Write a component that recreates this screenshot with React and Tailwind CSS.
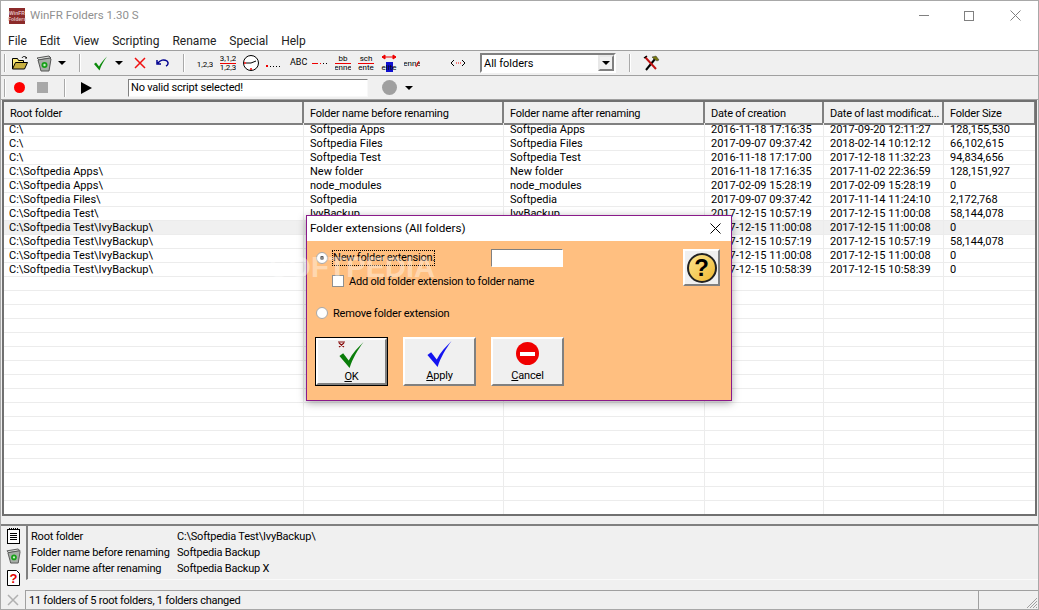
const font = "[font-family:Roboto,'Liberation_Sans',sans-serif]";
const uiFont = "[font-family:Roboto,'Open_Sans',sans-serif]";

const columns = ["Root folder", "Folder name before renaming", "Folder name after renaming", "Date of creation", "Date of last modificat...", "Folder Size"];

const rows = [
  ["C:\\", "Softpedia Apps", "Softpedia Apps", "2016-11-18 17:16:35", "2017-09-20 12:11:27", "128,155,530"],
  ["C:\\", "Softpedia Files", "Softpedia Files", "2017-09-07 09:37:42", "2018-02-14 10:12:12", "66,102,615"],
  ["C:\\", "Softpedia Test", "Softpedia Test", "2016-11-18 17:17:00", "2017-12-18 11:32:23", "94,834,656"],
  ["C:\\Softpedia Apps\\", "New folder", "New folder", "2016-11-18 17:16:35", "2017-11-02 22:36:59", "128,151,927"],
  ["C:\\Softpedia Apps\\", "node_modules", "node_modules", "2017-02-09 15:28:19", "2017-02-09 15:28:19", "0"],
  ["C:\\Softpedia Files\\", "Softpedia", "Softpedia", "2017-09-07 09:37:42", "2017-11-14 11:24:10", "2,172,768"],
  ["C:\\Softpedia Test\\", "IvyBackup", "IvyBackup", "2017-12-15 10:57:19", "2017-12-15 11:00:08", "58,144,078"],
  ["C:\\Softpedia Test\\IvyBackup\\", "", "", "2017-12-15 11:00:08", "2017-12-15 11:00:08", "0"],
  ["C:\\Softpedia Test\\IvyBackup\\", "", "", "2017-12-15 10:57:19", "2017-12-15 10:57:19", "58,144,078"],
  ["C:\\Softpedia Test\\IvyBackup\\", "", "", "2017-12-15 11:00:08", "2017-12-15 11:00:08", "0"],
  ["C:\\Softpedia Test\\IvyBackup\\", "", "", "2017-12-15 10:58:39", "2017-12-15 10:58:39", "0"],
];

const gridCols = "grid grid-cols-[300px_200px_201px_119px_120px_92px]";

function TextIcon({ top, bottom, line = "#e00" }) {
  return (
    <svg width="16" height="20" viewBox="0 0 16 20" className="shrink-0">
      <text x="8" y="8" textAnchor="middle" fontSize="8" fontFamily="Roboto" fill="#000">{top}</text>
      <text x="8" y="17" textAnchor="middle" fontSize="8" fontFamily="Roboto" fill="#000">{bottom}</text>
      <line x1="0" y1="10.5" x2="16" y2="10.5" stroke={line} />
    </svg>
  );
}

function Sep() {
  return <div className="w-[2px] h-[18px] bg-[#a9a9a9] border-r border-white shrink-0" />;
}

function Caret() {
  return <div className="w-0 h-0 border-l-[4px] border-r-[4px] border-t-[4px] border-l-transparent border-r-transparent border-t-black shrink-0" />;
}

function Folder() {
  return (
    <svg width="16" height="14" viewBox="0 0 16 14">
      <path d="M.5 13V2.500h5l1 2h5v2" fill="#f8e878" stroke="#000" />
      <path d="M.5 13l3-6.500h12l-3 6.500z" fill="#c8b040" stroke="#000" />
      <path d="M10 2c1-2 3-2 5 0l-2 0" fill="none" stroke="#000" />
    </svg>
  );
}

function Bin({ size = 15 }) {
  return (
    <svg width={size} height={size + 1} viewBox="0 0 16 17">
      <path d="M1 3l12-2 2 2-12 2z" fill="#d8dcd8" stroke="#555" />
      <path d="M2 5l12-2 1 1-2 12H5z" fill="#a8aea8" stroke="#555" />
      <circle cx="8.500" cy="10" r="3" fill="#18a018" />
      <circle cx="8.500" cy="10" r="1.200" fill="#c8f0c8" />
    </svg>
  );
}

function Tick({ color, w = 13, h = 15 }) {
  return (
    <svg width={w} height={h} viewBox="0 0 26 28">
      <path d="M0 15l4-3 6 8C14 12 20 6 26 0 20 8 14 18 11 28z" fill={color} />
    </svg>
  );
}

function Toolbar1() {
  return (
    <div className="h-[25px] flex items-center border-b border-[#a0a0a0] bg-[#f0f0f0]">
      <div className="ml-[3px]"><Sep /></div>
      <div className="ml-[6px]"><Folder /></div>
      <div className="ml-[8px]"><Bin size={16} /></div>
      <div className="ml-[6px]"><Caret /></div>
      <div className="ml-[13px]"><Sep /></div>
      <div className="ml-[13px]"><Tick color="#0a8a0a" /></div>
      <div className="ml-[8px]"><Caret /></div>
      <svg width="12" height="12" viewBox="0 0 12 12" className="ml-[11px]">
        <path d="M1 1l10 10M11 1L1 11" stroke="#f01010" strokeWidth="1.500" />
      </svg>
      <svg width="14" height="10" viewBox="0 0 14 10" className="ml-[10px]">
        <path d="M1 2v4h4M2 5c2-3 6-4 9-2 2 2 1 4-1 5" fill="none" stroke="#000090" strokeWidth="1.500" />
      </svg>
      <div className="ml-[13px]"><Sep /></div>
      <svg width="16" height="20" viewBox="0 0 16 20" className="ml-[12px]">
        <text x="8" y="14" textAnchor="middle" fontSize="8" fontFamily="Roboto" fill="#000">1,2,3</text>
      </svg>
      <div className="ml-[7px]"><TextIcon top="3,1,2" bottom="1,2,3" /></div>
      <svg width="16" height="16" viewBox="0 0 16 16" className="ml-[7px]">
        <circle cx="8" cy="8" r="7.500" fill="#fff" stroke="#000" />
        <path d="M8 8l5-2M8 8H3" stroke="#000" />
        <circle cx="8" cy="14" r="1" fill="#e00" />
        <circle cx="2" cy="8" r="1" fill="#e00" />
      </svg>
      <div className="ml-[7px] w-[16px] flex items-center gap-[2px] pt-[6px]">
        <span className="w-[2px] h-[2px] bg-[#e00]" />
        <span className="w-[1px] h-[1px] bg-black" />
        <span className="w-[1px] h-[1px] bg-black" />
        <span className="w-[1px] h-[1px] bg-black" />
        <span className="w-[1px] h-[1px] bg-black" />
      </div>
      <span className={`ml-[8px] text-[9px] w-[16px] ${font}`}>ABC</span>
      <div className="ml-[6px] w-[16px] flex items-center gap-[2px]">
        <span className="w-[6px] h-[1px] bg-[#e00]" />
        <span className="w-[1px] h-[1px] bg-[#e00]" />
        <span className="w-[1px] h-[1px] bg-black" />
        <span className="w-[1px] h-[1px] bg-black" />
      </div>
      <div className="ml-[7px]"><TextIcon top="bb" bottom="enne" /></div>
      <div className="ml-[7px]"><TextIcon top="sch" bottom="ente" /></div>
      <svg width="16" height="20" viewBox="0 0 16 20" className="ml-[7px]">
        <path d="M1 4h14M1 4l3-2v4zM15 4l-3-2v4z" stroke="#e00" fill="#e00" />
        <rect x="5" y="9" width="7" height="10" fill="#1010d0" />
        <text x="8" y="17" textAnchor="middle" fontSize="8" fontFamily="Roboto" fill="#000">elite</text>
      </svg>
      <svg width="16" height="20" viewBox="0 0 16 20" className="ml-[7px]">
        <text x="8" y="13" textAnchor="middle" fontSize="8" fontFamily="Roboto" fill="#000">enne</text>
        <path d="M12 14l3-6" stroke="#e00" />
      </svg>
      <svg width="16" height="10" viewBox="0 0 16 10" className="ml-[30px]">
        <path d="M4 2L1 5l3 3M12 2l3 3-3 3" fill="none" stroke="#000" />
        <path d="M6 5h1M8 5h1M10 5h1" stroke="#e00" />
      </svg>
      <div className="ml-[14px] w-[136px] h-[20px] flex items-center bg-white border-2 border-b-white border-r-white border-t-[#808080] border-l-[#808080]">
        <span className={`flex-1 pl-[2px] pt-[3px] text-[11px] ${font}`}>All folders</span>
        <div className="w-[16px] h-full bg-[#f0f0f0] border-2 border-[#808080] border-t-[#e8e8e8] border-l-[#e8e8e8] flex items-center justify-center">
          <Caret />
        </div>
      </div>
      <div className="ml-[13px]"><Sep /></div>
      <svg width="17" height="16" viewBox="0 0 17 16" className="ml-[12px]">
        <path d="M3 15L12 4" stroke="#000" strokeWidth="2" />
        <path d="M9 2l4-1 3 4-2 1-3-2z" fill="#7a7a10" stroke="#333" strokeWidth=".5" />
        <path d="M2 2l11 12" stroke="#c01010" strokeWidth="2" />
        <path d="M1 3l3-2" stroke="#000" strokeWidth="1.500" />
      </svg>
    </div>
  );
}

function Toolbar2() {
  return (
    <div className="h-[24px] flex items-center border-b border-[#a0a0a0] bg-[#f0f0f0]">
      <div className="ml-[3px]"><Sep /></div>
      <div className="ml-[8px] w-[11px] h-[11px] rounded-full bg-[#ff0000]" />
      <div className="ml-[12px] w-[11px] h-[11px] bg-[#a8a8a8]" />
      <div className="ml-[16px]"><Sep /></div>
      <div className="ml-[15px] w-0 h-0 border-t-[6px] border-b-[6px] border-l-[11px] border-t-transparent border-b-transparent border-l-black" />
      <div className={`ml-[36px] w-[240px] h-[18px] flex items-center bg-white border border-b-[#f8f8f8] border-r-[#f8f8f8] border-t-[#808080] border-l-[#808080] pl-[2px] pt-[1px] text-[11px] tracking-[-0.2px] ${font}`}>
        No valid script selected!
      </div>
      <div className="ml-[14px] w-[15px] h-[15px] rounded-full bg-[#a0a0a0]" />
      <div className="ml-[8px]"><Caret /></div>
    </div>
  );
}

function FileGrid() {
  return (
    <div className="flex-1 min-h-0 overflow-hidden bg-white border-2 border-[#707070] ml-[1px] mr-[1px]">
      <div className={`${gridCols} h-[21px] bg-[#f0f0f0] text-[11px] tracking-[-0.2px] ${font}`}>
        {columns.map((c) => (
          <div key={c} className="pl-[6px] pt-[4px] flex items-center border-r-2 border-b-2 border-[#808080] whitespace-nowrap">{c}</div>
        ))}
      </div>
      {rows.map((r, i) => (
        <div key={i} className={`${gridCols} h-[14px] text-[11px] leading-[13px] border-b border-[#ececec] ${i === 7 ? "bg-[#f0f0f0]" : ""} ${font}`}>
          {r.map((cell, j) => (
            <div key={j} className={`border-r border-[#ececec] whitespace-nowrap overflow-hidden ${j === 0 ? "pl-[5px]" : "pl-[6px]"}`}>{cell}</div>
          ))}
        </div>
      ))}
      {Array.from({ length: 18 }).map((_, i) => (
        <div key={i} className={`${gridCols} h-[14px] border-b border-[#ececec]`}>
          {columns.map((c) => (
            <div key={c} className="border-r border-[#ececec]" />
          ))}
        </div>
      ))}
    </div>
  );
}

function DetailsPanel() {
  return (
    <div className="h-[56px] flex border-t-2 border-[#808080] mt-[8px] bg-[#f0f0f0]">
      <div className="w-[25px] flex flex-col items-center pt-[2px]">
        <svg width="13" height="16" viewBox="0 0 13 16" className="shrink-0">
          <rect x=".5" y="1.500" width="12" height="14" fill="#fff" stroke="#000" />
          <path d="M2.500 0v2M4.500 0v2M6.500 0v2M8.500 0v2M10.500 0v2M3 5.500h7M3 7.500h7M3 9.500h7M3 11.500h7" stroke="#000" />
        </svg>
        <div className="mt-[4px] shrink-0"><Bin size={15} /></div>
        <svg width="13" height="16" viewBox="0 0 13 16" className="mt-[6px] shrink-0">
          <path d="M.5.500h9l3 3v12H.5z" fill="#fff" stroke="#000" />
          <text x="6.500" y="13" textAnchor="middle" fontSize="13" fontWeight="700" fontFamily="Liberation Sans" fill="#e00000">?</text>
        </svg>
      </div>
      <div className={`flex-1 border-l-2 border-b border-[#808080] border-b-[#fafafa] pl-[3px] pt-[3px] text-[11px] leading-[16px] tracking-[-0.2px] ${font}`}>
        <div className="flex"><span className="w-[146px] whitespace-nowrap">Root folder</span><span>C:\Softpedia Test\IvyBackup\</span></div>
        <div className="flex"><span className="w-[146px] whitespace-nowrap">Folder name before renaming</span><span>Softpedia Backup</span></div>
        <div className="flex"><span className="w-[146px] whitespace-nowrap">Folder name after renaming</span><span>Softpedia Backup X</span></div>
      </div>
    </div>
  );
}

function StatusBar() {
  return (
    <div className="h-[19px] mt-[10px] flex items-center bg-[#f0f0f0]">
      <div className="w-[24px] flex justify-center">
        <svg width="12" height="12" viewBox="0 0 12 12">
          <path d="M1 1l10 10M11 1L1 11" stroke="#b0b0b0" strokeWidth="1.500" />
        </svg>
      </div>
      <div className={`w-[953px] h-full flex items-center pl-[3px] pt-[3px] border-t border-l border-[#a0a0a0] text-[11px] tracking-[-0.25px] ${font}`}>
        11 folders of 5 root folders, 1 folders changed
      </div>
      <div className="flex-1 h-full border-t border-l border-[#a0a0a0] relative">
        <svg width="12" height="12" viewBox="0 0 12 12" className="absolute right-0 bottom-0">
          <path d="M11 1L1 11M11 4l-7 7M11 7l-4 4M11 10l-1 1" stroke="#a0a0a0" />
        </svg>
      </div>
    </div>
  );
}

function DialogButton({ underline, rest, icon, def }) {
  return (
    <div className={`w-[73px] h-[49px] ${def ? "border border-black" : ""}`}>
      <div className="w-full h-full flex flex-col items-center bg-[#f0f0f0] border-2 border-t-white border-l-white border-r-[#808080] border-b-[#808080]">
        <div className="h-[28px] flex items-end justify-center relative shrink-0">{icon}</div>
        <span className={`text-[11px] leading-[14px] mt-[2px] ${font}`}><span className="underline">{underline}</span>{rest}</span>
      </div>
    </div>
  );
}

function Radio({ checked }) {
  return (
    <div className="w-[12px] h-[12px] rounded-full bg-white border border-[#a8a8a8] flex items-center justify-center shrink-0">
      {checked && <div className="w-[4px] h-[4px] rounded-full bg-[#404040]" />}
    </div>
  );
}

function Dialog() {
  return (
    <div className="absolute left-[305px] top-[214px] w-[426px] h-[186px] flex flex-col border border-[#8a1a8a] shadow-[0_2px_8px_rgba(0,0,0,0.35)]">
      <div className="h-[25px] shrink-0 flex items-center justify-between bg-white pl-[3px] pr-[10px]">
        <span className={`text-[11.7px] ${uiFont}`}>Folder extensions (All folders)</span>
        <svg width="11" height="11" viewBox="0 0 11 11">
          <path d="M.5.500l10 10M10.500.500l-10 10" stroke="#000" />
        </svg>
      </div>
      <div className={`flex-1 bg-[#ffbf80] relative pl-[8px] pt-[8px] text-[11px] tracking-[-0.2px] ${font}`}>
        <div className="h-[18px] flex items-center pl-[1px]">
          <Radio checked />
          <span className="w-[103px] ml-[4px] border border-dotted border-black leading-[14px] whitespace-nowrap">New folder extension:</span>
          <div className="ml-[56px] w-[72px] h-[18px] bg-white border border-[#808080] border-r-white border-b-white" />
        </div>
        <div className="h-[14px] mt-[7px] ml-[17px] flex items-center">
          <div className="w-[12px] h-[12px] bg-white border border-[#909090] shrink-0" />
          <span className="ml-[5px] pt-[2px]">Add old folder extension to folder name</span>
        </div>
        <div className="h-[14px] mt-[18px] pl-[1px] flex items-center">
          <Radio />
          <span className="ml-[5px] pt-[2px]">Remove folder extension</span>
        </div>
        <div className="flex gap-[15px] mt-[17px]">
          <DialogButton def underline="O" rest="K" icon={
            <>
              <svg width="9" height="7" viewBox="0 0 9 7" className="absolute -left-[2px] top-[1px]">
                <path d="M1 1h7M2 6l5-4M2 2l5 4" stroke="#8a1010" strokeWidth="1.200" />
              </svg>
              <Tick color="#0a7d0a" w={25} h={26} />
            </>
          } />
          <DialogButton underline="A" rest="pply" icon={<Tick color="#1414f0" w={25} h={26} />} />
          <DialogButton underline="C" rest="ancel" icon={
            <div className="w-[23px] h-[23px] rounded-full bg-[#f00000] flex items-center justify-center mb-[2px]">
              <div className="w-[15px] h-[4px] bg-white" />
            </div>
          } />
        </div>
        <div className="absolute left-[376px] top-[8px] w-[37px] h-[37px] bg-[#f0f0f0] border-2 border-t-white border-l-white border-r-[#808080] border-b-[#808080] flex items-center justify-center">
          <div className="w-[30px] h-[30px] rounded-full bg-linear-to-br from-[#fbe58a] to-[#f0b828] border-2 border-[#222] flex items-center justify-center text-[24px] font-bold leading-none [font-family:'Liberation_Sans',sans-serif]">?</div>
        </div>
      </div>
    </div>
  );
}

export default function App() {
  return (
    <div className="relative w-[1039px] h-[610px] overflow-hidden flex flex-col bg-[#f0f0f0] text-black border border-[#a8a8a8]">
      <div className="h-[29px] shrink-0 flex items-center bg-white">
        <div className="ml-[8px] w-[16px] h-[16px] bg-[#8c2a2a] text-[#e0c0c0] text-[5px] leading-[6px] font-bold flex flex-col items-center justify-center [font-family:'Liberation_Sans',sans-serif]">
          <span>WinFR</span>
          <span>Folders</span>
        </div>
        <span className={`ml-[5px] text-[11.5px] text-[#909090] ${uiFont}`}>WinFR Folders 1.30 S</span>
        <div className="ml-auto flex items-center mr-[17px]">
          <div className="w-[10px] h-[1px] bg-[#808080]" />
          <div className="ml-[35px] w-[10px] h-[10px] border border-[#808080]" />
          <svg width="11" height="11" viewBox="0 0 11 11" className="ml-[36px]">
            <path d="M.5.500l10 10M10.500.500l-10 10" stroke="#808080" />
          </svg>
        </div>
      </div>
      <div className={`h-[20px] shrink-0 flex items-center gap-[13px] bg-white pl-[7px] pt-[2px] text-[12px] text-[#222] ${uiFont}`}>
        {["File", "Edit", "View", "Scripting", "Rename", "Special", "Help"].map((m) => (
          <span key={m}>{m}</span>
        ))}
      </div>
      <div className="h-[1px] shrink-0 bg-[#a0a0a0]" />
      <Toolbar1 />
      <Toolbar2 />
      <FileGrid />
      <DetailsPanel />
      <StatusBar />
      <Dialog />
      <div className="absolute left-[268px] top-[252px] text-[29px] leading-none font-bold text-white/40 pointer-events-none [font-family:'Liberation_Sans',sans-serif]">SOFTPEDIA</div>
    </div>
  );
}
